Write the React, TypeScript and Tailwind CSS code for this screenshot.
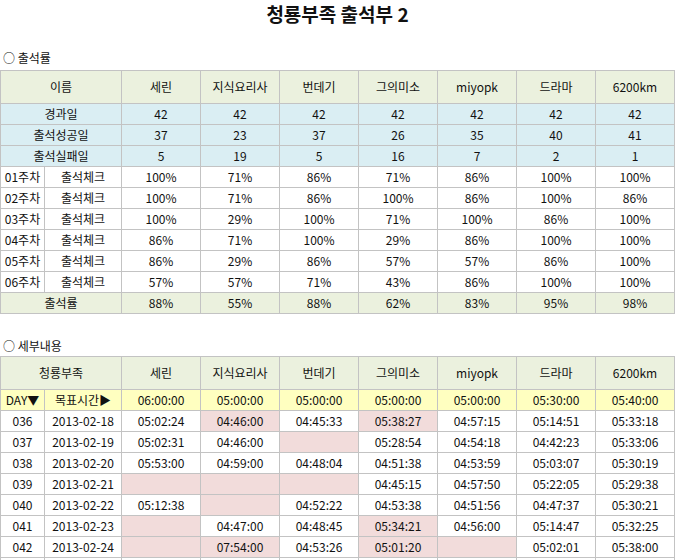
import React from "react";

const names = ["세린", "지식요리사", "번데기", "그의미소", "miyopk", "드라마", "6200km"];
const stats: [string, string[]][] = [
  ["경과일", ["42", "42", "42", "42", "42", "42", "42"]],
  ["출석성공일", ["37", "23", "37", "26", "35", "40", "41"]],
  ["출석실패일", ["5", "19", "5", "16", "7", "2", "1"]],
];
const weeks: string[][] = [
  ["100%", "71%", "86%", "71%", "86%", "100%", "100%"],
  ["100%", "71%", "86%", "100%", "86%", "100%", "86%"],
  ["100%", "29%", "100%", "71%", "100%", "86%", "100%"],
  ["86%", "71%", "100%", "29%", "86%", "100%", "100%"],
  ["86%", "29%", "86%", "57%", "57%", "86%", "100%"],
  ["57%", "57%", "71%", "43%", "86%", "100%", "100%"],
];
const rate = ["88%", "55%", "88%", "62%", "83%", "95%", "98%"];
const goals = ["06:00:00", "05:00:00", "05:00:00", "05:00:00", "05:00:00", "05:30:00", "05:40:00"];
type C = [string, boolean];
const days: [string, string, C[]][] = [
  ["036", "2013-02-18", [["05:02:24", false], ["04:46:00", true], ["04:45:33", false], ["05:38:27", true], ["04:57:15", false], ["05:14:51", false], ["05:33:18", false]]],
  ["037", "2013-02-19", [["05:02:31", false], ["04:46:00", false], ["", true], ["05:28:54", false], ["04:54:18", false], ["04:42:23", false], ["05:33:06", false]]],
  ["038", "2013-02-20", [["05:53:00", false], ["04:59:00", false], ["04:48:04", false], ["04:51:38", false], ["04:53:59", false], ["05:03:07", false], ["05:30:19", false]]],
  ["039", "2013-02-21", [["", true], ["", true], ["", true], ["04:45:15", false], ["04:57:50", false], ["05:22:05", false], ["05:29:38", false]]],
  ["040", "2013-02-22", [["05:12:38", false], ["", true], ["04:52:22", false], ["04:53:38", false], ["04:51:56", false], ["04:47:37", false], ["05:30:21", false]]],
  ["041", "2013-02-23", [["", true], ["04:47:00", false], ["04:48:45", false], ["05:34:21", true], ["04:56:00", false], ["05:14:47", false], ["05:32:25", false]]],
  ["042", "2013-02-24", [["", true], ["07:54:00", true], ["04:53:26", false], ["05:01:20", true], ["", true], ["05:02:01", false], ["05:38:00", false]]],
  ["", "", [["", false], ["", false], ["", false], ["", false], ["", false], ["", false], ["", false]]],
];

const td = "border border-[#c3c3c3] text-center p-0 h-[21px]";
const hd = "border border-[#c3c3c3] text-center p-0 h-[33px] bg-[#ebf1de]";

function Cols() {
  return (
    <colgroup>
      <col className="w-[44px]" />
      <col className="w-[77px]" />
      {names.map((n) => (
        <col key={n} className="w-[79px]" />
      ))}
    </colgroup>
  );
}

export default function App() {
  return (
    <div
      className="w-[675px] h-[560px] overflow-hidden bg-white text-[12px] leading-none text-[#111]"
      style={{ fontFamily: '"Noto Sans CJK KR", "Noto Sans", sans-serif' }}
    >
      <div className="h-[30px] pt-[4px] text-center text-[19px] font-bold">청룡부족 출석부 2</div>
      <div className="h-[40px] pt-[22px] pl-[3px]">○ 출석률</div>
      <table className="table-fixed border-collapse w-[675px]">
        <Cols />
        <tbody>
          <tr>
            <td colSpan={2} className={hd}>이름</td>
            {names.map((n) => (
              <td key={n} className={hd}>{n}</td>
            ))}
          </tr>
          {stats.map(([l, v]) => (
            <tr key={l} className="bg-[#daeef3]">
              <td colSpan={2} className={td}>{l}</td>
              {v.map((x, i) => (
                <td key={i} className={td}>{x}</td>
              ))}
            </tr>
          ))}
          {weeks.map((v, w) => (
            <tr key={w}>
              <td className={td}>{`0${w + 1}주차`}</td>
              <td className={td}>출석체크</td>
              {v.map((x, i) => (
                <td key={i} className={td}>{x}</td>
              ))}
            </tr>
          ))}
          <tr className="bg-[#ebf1de]">
            <td colSpan={2} className={td}>출석률</td>
            {rate.map((x, i) => (
              <td key={i} className={td}>{x}</td>
            ))}
          </tr>
        </tbody>
      </table>
      <div className="h-[42px] pt-[26px] pl-[3px]">○ 세부내용</div>
      <table className="table-fixed border-collapse w-[675px]">
        <Cols />
        <tbody>
          <tr>
            <td colSpan={2} className={hd}>청룡부족</td>
            {names.map((n) => (
              <td key={n} className={hd}>{n}</td>
            ))}
          </tr>
          <tr className="bg-[#ffffc0]">
            <td className={td}>DAY▼</td>
            <td className={td}>목표시간▶</td>
            {goals.map((x, i) => (
              <td key={i} className={td}>{x}</td>
            ))}
          </tr>
          {days.map(([d, dt, cs], r) => (
            <tr key={r}>
              <td className={td}>{d}</td>
              <td className={td}>{dt}</td>
              {cs.map(([x, p], i) => (
                <td key={i} className={`${td} ${p ? "bg-[#f2dcdb]" : ""}`}>{x}</td>
              ))}
            </tr>
          ))}
        </tbody>
      </table>
    </div>
  );
}
